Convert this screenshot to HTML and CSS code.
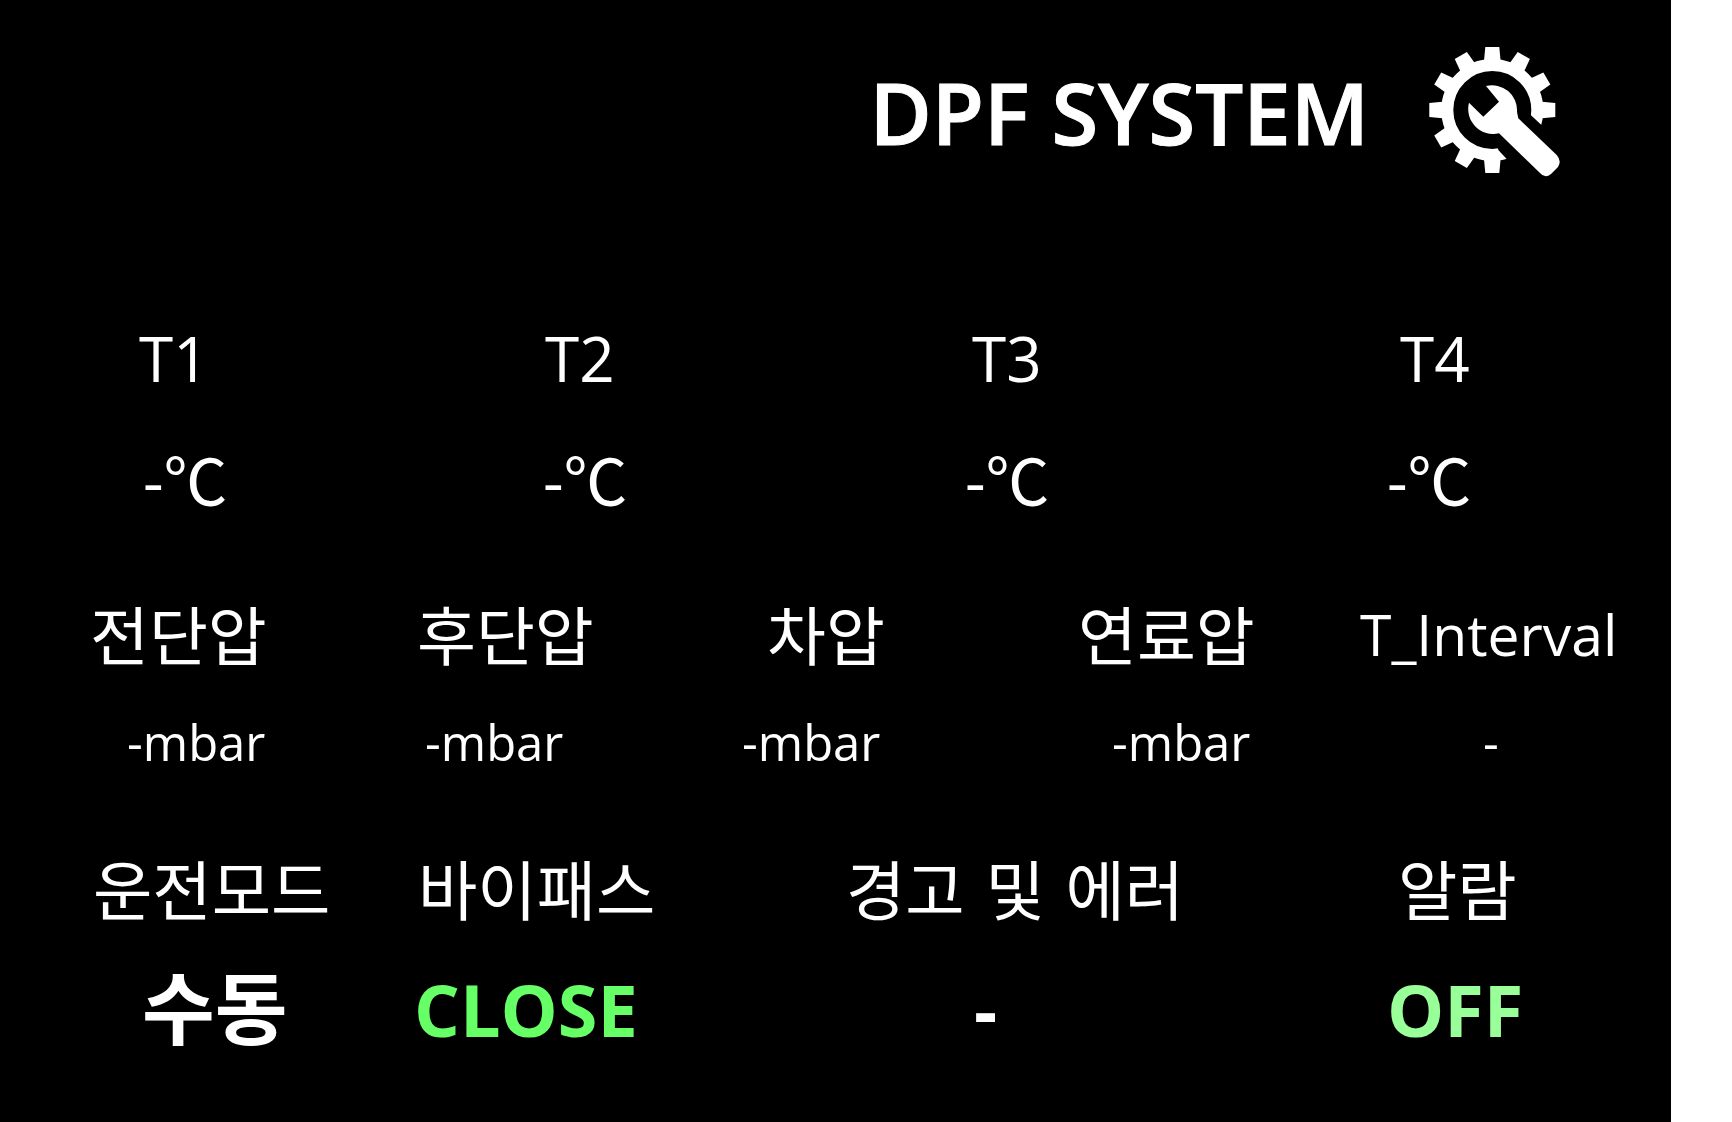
FILE: index.html
```html
<!DOCTYPE html>
<html lang="ko">

<head>
     <meta charset="UTF-8">
     <meta name="viewport" content="width=device-width, initial-scale=1.0">
     <title>DPF SYSTEM</title>
     <link rel="stylesheet" href="styles.css">
</head>

<body>
     <div class="panel">
          <div class="header">
               <h1 class="title">DPF SYSTEM</h1>
               <svg class="gear" viewBox="0 0 140 140" width="140" height="140">
                    <g fill="#fff">
                         <polygon points="-7,-63 7,-63 8.5,-47 -8.5,-47" transform="translate(72.3 70)" />
                         <polygon points="-7,-63 7,-63 8.5,-47 -8.5,-47" transform="translate(72.3 70) rotate(30)" />
                         <polygon points="-7,-63 7,-63 8.5,-47 -8.5,-47" transform="translate(72.3 70) rotate(60)" />
                         <polygon points="-7,-63 7,-63 8.5,-47 -8.5,-47" transform="translate(72.3 70) rotate(90)" />
                         <polygon points="-7,-63 7,-63 8.5,-47 -8.5,-47" transform="translate(72.3 70) rotate(180)" />
                         <polygon points="-7,-63 7,-63 8.5,-47 -8.5,-47" transform="translate(72.3 70) rotate(210)" />
                         <polygon points="-7,-63 7,-63 8.5,-47 -8.5,-47" transform="translate(72.3 70) rotate(240)" />
                         <polygon points="-7,-63 7,-63 8.5,-47 -8.5,-47" transform="translate(72.3 70) rotate(270)" />
                         <polygon points="-7,-63 7,-63 8.5,-47 -8.5,-47" transform="translate(72.3 70) rotate(300)" />
                         <polygon points="-7,-63 7,-63 8.5,-47 -8.5,-47" transform="translate(72.3 70) rotate(330)" />
                    </g>
                    <circle cx="72.3" cy="70" r="45" fill="none" stroke="#fff" stroke-width="12" />
                    <polygon points="110.7,75 130,93 95,128 78.3,110 72,70" fill="#000" />
                    <path fill="#fff" d="M66 46A25 25 0 0 1 97 72L98.3 78.3L136.7 115Q142 121 138 127L131 134Q125 139 120 133L79 93.3A25 25 0 0 1 49 62.7L63.3 76.7L79 61.7Z" />
               </svg>
          </div>

          <div class="row row-t">
               <span>T1</span><span>T2</span><span>T3</span><span>T4</span>
          </div>
          <div class="row row-temp">
               <span>-<span class="unit">℃</span></span><span>-<span class="unit">℃</span></span><span>-<span class="unit">℃</span></span><span>-<span class="unit">℃</span></span>
          </div>
          <div class="row row-press">
               <span>전단압</span><span>후단압</span><span>차압</span><span>연료압</span><span class="latin">T_Interval</span>
          </div>
          <div class="row row-mbar">
               <span>-mbar</span><span>-mbar</span><span>-mbar</span><span>-mbar</span><span>-</span>
          </div>
          <div class="row row-mode">
               <span>운전모드</span><span>바이패스</span><span>경고 및 에러</span><span>알람</span>
          </div>
          <div class="row row-state">
               <span class="manual">수동</span><span class="on">CLOSE</span><span>-</span><span class="off">OFF</span>
          </div>
     </div>
</body>

</html>
```

FILE: styles.css
```css
* {
     box-sizing: border-box;
}

body {
     margin: 0;
     background: #fff;
     font-family: "Open Sans", "Noto Sans CJK KR", sans-serif;
}

.panel {
     width: 1671px;
     height: 1122px;
     background: #000;
     color: #fff;
     overflow: hidden;
}

.header {
     display: flex;
     justify-content: flex-end;
     align-items: center;
     height: 220px;
     padding: 40px 111px 40px 0;
}

.title {
     margin: 4px 51px 0 0;
     font-size: 85px;
     font-weight: 600;
     line-height: 1;
     white-space: nowrap;
     -webkit-text-stroke: 1px #fff;
}

.gear {
     flex: none;
}

.row {
     display: grid;
     align-items: center;
     height: 100px;
     white-space: pre;
}

.row-t {
     grid-template-columns: 406px 427px 428px 1fr;
     margin-top: 88px;
     padding-left: 139px;
     font-size: 62px;
}

.row-temp {
     grid-template-columns: 400px 422px 422px 1fr;
     margin-top: 19px;
     padding-left: 143px;
     font-size: 64px;
}

.unit {
     font-family: "Noto Sans CJK KR", sans-serif;
}

.row-press {
     grid-template-columns: 327px 350px 311px 282px 1fr;
     margin-top: 55px;
     padding-left: 90px;
     font-size: 64px;
}

.latin {
     margin-top: 4px;
     font-size: 57px;
}

.row-mbar {
     grid-template-columns: 298px 317px 370px 371px 1fr;
     margin-top: 10px;
     padding-left: 127px;
     font-size: 49px;
}

.row-mode {
     grid-template-columns: 325px 428px 552px 1fr;
     margin-top: 45px;
     padding-left: 93px;
     font-size: 64.5px;
     word-spacing: 4px;
}

.row-state {
     grid-template-columns: 272px 560px 413px 1fr;
     margin-top: 10px;
     padding-left: 142px;
     font-size: 72px;
     font-weight: 700;
}

.manual {
     margin-bottom: 8px;
     font-size: 79px;
}

.on {
     color: #66ff66;
}

.off {
     color: #99ff99;
}
```
